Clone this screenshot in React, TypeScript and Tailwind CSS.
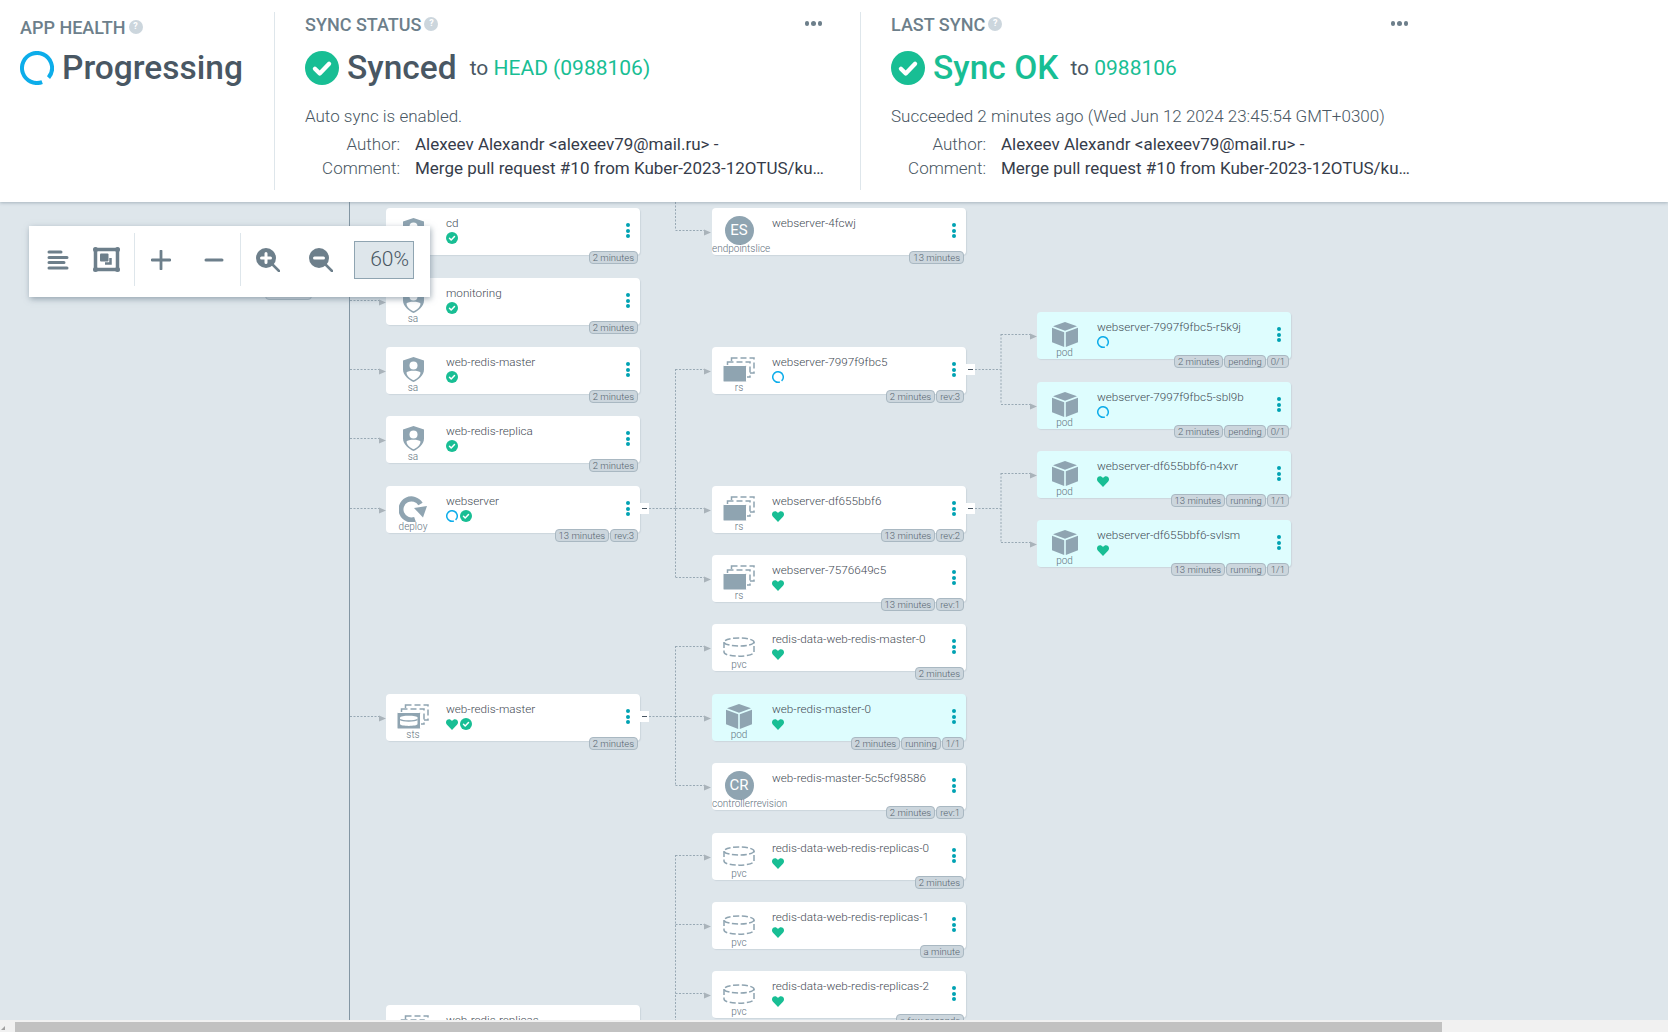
import React from 'react';

const G = '#8fa4b1';
const ROWS = [208, 278, 347, 416, 486, 555, 624, 694, 763, 833, 902, 971];
const CANVAS_TOP = 202;

function Help() {
  return (
    <span className="inline-flex w-[14px] h-[14px] rounded-full bg-[#ccd6dd] text-white text-[9px] font-bold items-center justify-center ml-[3px]">?</span>
  );
}

function CheckCircle({ size }: { size: number }) {
  return (
    <svg width={size} height={size} viewBox="0 0 24 24" className="shrink-0">
      <circle cx="12" cy="12" r="12" fill="#18be94" />
      <path d="M7 12.5l3.4 3.4L17 9" fill="none" stroke="#fff" strokeWidth="3" strokeLinecap="round" strokeLinejoin="round" />
    </svg>
  );
}

function Ring({ size, width }: { size: number; width: number }) {
  const r = 12 - width / 2;
  const c = 2 * Math.PI * r;
  return (
    <svg width={size} height={size} viewBox="0 0 24 24" className="shrink-0">
      <circle cx="12" cy="12" r={r} fill="none" stroke="#0dadea" strokeWidth={width} strokeDasharray={`${c * 0.91} ${c * 0.09}`} transform="rotate(70 12 12)" />
    </svg>
  );
}

function Heart() {
  return (
    <svg width="12" height="11" viewBox="0 0 24 22" className="shrink-0">
      <path d="M12 22L2 11.5C-1 8 -0.5 3.5 2.5 1.5 5.5-0.5 9.500.5 12 4c2.500-3.500 6.500-4.500 9.500-2.500 3 2 3.500 6.500.5 10z" fill="#18be94" />
    </svg>
  );
}

function Shield() {
  return (
    <svg width="21" height="25" viewBox="0 0 21 25">
      <path d="M10.500 0L21 3.500V12.500C21 18.500 15 23 10.500 25 6 23 0 18.500 0 12.500V3.500Z" fill={G} />
      <circle cx="10.500" cy="8.500" r="4" fill="#fff" />
      <path d="M3.500 15.500C5 13 16 13 17.500 15.500 17.500 19 13.500 22 10.500 23.300 7.500 22 3.500 19 3.500 15.500Z" fill="#fff" />
    </svg>
  );
}

function Deploy() {
  return (
    <svg width="28" height="26" viewBox="0 0 28 26">
      <path d="M16 23.300A10.500 10.500 0 1 1 21.500 8" fill="none" stroke={G} strokeWidth="5" />
      <polygon points="15,12 28,10 24,21.500" fill={G} />
    </svg>
  );
}

function Stack({ sts }: { sts?: boolean }) {
  return (
    <svg width="32" height="25" viewBox="0 0 32 25">
      <rect x="8.500" y="1" width="22.500" height="15" fill="none" stroke={G} strokeWidth="1.500" strokeDasharray="6 3" />
      <rect x="4.500" y="5" width="22.500" height="15" fill="#fff" stroke={G} strokeWidth="1.500" strokeDasharray="6 3" />
      <rect x="0" y="8.500" width="23.500" height="16.500" rx="1" fill={G} stroke="#fff" strokeWidth="1" />
      {sts && (
        <g>
          <path d="M3 13.500C3 11 20.500 11 20.500 13.500V20C20.500 22.500 3 22.500 3 20Z" fill="#fff" />
          <path d="M3 15.500C6 17.500 17.500 17.500 20.500 15.500" fill="none" stroke={G} strokeWidth="1.500" />
        </g>
      )}
    </svg>
  );
}

function Pvc() {
  return (
    <svg width="32" height="20" viewBox="0 0 32 20" fill="none" stroke={G} strokeWidth="1.500" strokeDasharray="6 2.500">
      <ellipse cx="16" cy="5" rx="15" ry="4" />
      <path d="M1 5V15C1 20.500 31 20.500 31 15V5" />
    </svg>
  );
}

function Pod() {
  return (
    <svg width="26" height="25" viewBox="0 0 26 25" fill={G}>
      <polygon points="13,0 25,4.300 13,8.800 1,4.300" />
      <polygon points="0,5.800 12.200,10.300 12.200,25 0,20.300" />
      <polygon points="26,5.800 13.800,10.300 13.800,25 26,20.300" />
    </svg>
  );
}

function Letters({ t }: { t: string }) {
  return (
    <span className="w-[29px] h-[29px] rounded-full bg-[#8fa4b1] text-white text-[15px] flex items-center justify-center shrink-0">{t}</span>
  );
}

function KindIcon({ kind }: { kind: string }) {
  if (kind === 'sa') return <Shield />;
  if (kind === 'deploy') return <Deploy />;
  if (kind === 'rs') return <Stack />;
  if (kind === 'sts') return <Stack sts />;
  if (kind === 'pvc') return <Pvc />;
  if (kind === 'pod') return <Pod />;
  if (kind === 'endpointslice') return <Letters t="ES" />;
  return <Letters t="CR" />;
}

type S = 'check' | 'ring' | 'heart';

type N = {
  x: number;
  y: number;
  kind: string;
  name: string;
  st: S[];
  badges: string[];
  toggle?: boolean;
};

const C1 = 386;
const C2 = 712;
const C3 = 1037;
const P = [312, 382, 451, 520];

const nodes: N[] = [
  { x: C1, y: ROWS[0], kind: 'sa', name: 'cd', st: ['check'], badges: ['2 minutes'] },
  { x: C1, y: ROWS[1], kind: 'sa', name: 'monitoring', st: ['check'], badges: ['2 minutes'] },
  { x: C1, y: ROWS[2], kind: 'sa', name: 'web-redis-master', st: ['check'], badges: ['2 minutes'] },
  { x: C1, y: ROWS[3], kind: 'sa', name: 'web-redis-replica', st: ['check'], badges: ['2 minutes'] },
  { x: C1, y: ROWS[4], kind: 'deploy', name: 'webserver', st: ['ring', 'check'], badges: ['13 minutes', 'rev:3'], toggle: true },
  { x: C1, y: ROWS[7], kind: 'sts', name: 'web-redis-master', st: ['heart', 'check'], badges: ['2 minutes'], toggle: true },
  { x: C1, y: 1005, kind: 'sts', name: 'web-redis-replicas', st: ['heart', 'check'], badges: ['2 minutes'], toggle: true },
  { x: C2, y: ROWS[0], kind: 'endpointslice', name: 'webserver-4fcwj', st: [], badges: ['13 minutes'] },
  { x: C2, y: ROWS[2], kind: 'rs', name: 'webserver-7997f9fbc5', st: ['ring'], badges: ['2 minutes', 'rev:3'], toggle: true },
  { x: C2, y: ROWS[4], kind: 'rs', name: 'webserver-df655bbf6', st: ['heart'], badges: ['13 minutes', 'rev:2'], toggle: true },
  { x: C2, y: ROWS[5], kind: 'rs', name: 'webserver-7576649c5', st: ['heart'], badges: ['13 minutes', 'rev:1'] },
  { x: C2, y: ROWS[6], kind: 'pvc', name: 'redis-data-web-redis-master-0', st: ['heart'], badges: ['2 minutes'] },
  { x: C2, y: ROWS[7], kind: 'pod', name: 'web-redis-master-0', st: ['heart'], badges: ['2 minutes', 'running', '1/1'] },
  { x: C2, y: ROWS[8], kind: 'controllerrevision', name: 'web-redis-master-5c5cf98586', st: [], badges: ['2 minutes', 'rev:1'] },
  { x: C2, y: ROWS[9], kind: 'pvc', name: 'redis-data-web-redis-replicas-0', st: ['heart'], badges: ['2 minutes'] },
  { x: C2, y: ROWS[10], kind: 'pvc', name: 'redis-data-web-redis-replicas-1', st: ['heart'], badges: ['a minute'] },
  { x: C2, y: ROWS[11], kind: 'pvc', name: 'redis-data-web-redis-replicas-2', st: ['heart'], badges: ['a few seconds'] },
  { x: C3, y: P[0], kind: 'pod', name: 'webserver-7997f9fbc5-r5k9j', st: ['ring'], badges: ['2 minutes', 'pending', '0/1'] },
  { x: C3, y: P[1], kind: 'pod', name: 'webserver-7997f9fbc5-sbl9b', st: ['ring'], badges: ['2 minutes', 'pending', '0/1'] },
  { x: C3, y: P[2], kind: 'pod', name: 'webserver-df655bbf6-n4xvr', st: ['heart'], badges: ['13 minutes', 'running', '1/1'] },
  { x: C3, y: P[3], kind: 'pod', name: 'webserver-df655bbf6-svlsm', st: ['heart'], badges: ['13 minutes', 'running', '1/1'] },
];

function Node({ n }: { n: N }) {
  const long = n.kind.length > 8;
  return (
    <div
      className={`absolute w-[254px] h-[47px] rounded-[4px] flex shadow-[1px_1px_1px_#ccd6dd] ${n.kind === 'pod' ? 'bg-[#defdfe]' : 'bg-white'}`}
      style={{ left: n.x, top: n.y - CANVAS_TOP }}
    >
      <div className={`w-[54px] shrink-0 flex flex-col items-center ${n.kind === 'pod' && n.x === C3 ? 'pl-[1px]' : ''}`}>
        <div className="h-[36px] pt-[9px] flex items-center justify-center">
          <KindIcon kind={n.kind} />
        </div>
        <div className={`h-[10px] leading-[10px] text-[10px] font-light whitespace-nowrap text-[#5f7380] ${long ? 'self-start' : ''}`}>{n.kind}</div>
      </div>
      <div className="ml-[6px] flex-1 min-w-0">
        <div className="mt-[8px] h-[14px] leading-[14px] text-[11.7px] font-light text-[#3f4a54] whitespace-nowrap">{n.name}</div>
        <div className="mt-[2px] h-[12px] flex items-center gap-[1.5px]">
          {n.st.map((s, i) =>
            s === 'check' ? <CheckCircle key={i} size={12} /> : s === 'ring' ? <Ring key={i} size={12} width={3} /> : <Heart key={i} />
          )}
        </div>
      </div>
      <div className="mr-[10px] mt-[15px] self-start flex flex-col gap-[1.7px]">
        <span className="w-[4px] h-[4px] rounded-full bg-[#00a2b3]" />
        <span className="w-[4px] h-[4px] rounded-full bg-[#00a2b3]" />
        <span className="w-[4px] h-[4px] rounded-full bg-[#00a2b3]" />
      </div>
      <div className="absolute right-[2px] top-[43px] flex gap-[1px]">
        {n.badges.map((b) => (
          <span key={b} className="h-[13px] leading-[11px] px-[3px] text-[9.5px] font-light whitespace-nowrap rounded-[4px] bg-[#ccd6dd] border border-[#a9b8c2] text-[#55646f]">{b}</span>
        ))}
      </div>
      {n.toggle && (
        <div className="absolute left-[253px] top-[17px] w-[10px] h-[11px] bg-white flex items-center justify-center">
          <span className="w-[5px] h-[1px] bg-[#495763]" />
        </div>
      )}
    </div>
  );
}

function Edges() {
  const y = (v: number) => v - CANVAS_TOP;
  const h: [number, number, number][] = [];
  const arrows: [number, number][] = [];
  const add = (x1: number, x2: number, row: number) => {
    h.push([x1, x2, y(row + 22)]);
    arrows.push([x2 + 6, y(row + 25)]);
  };
  [ROWS[1], ROWS[2], ROWS[3], ROWS[4], ROWS[7]].forEach((r) => add(350, 380, r));
  ROWS.forEach((r, i) => {
    if (i !== 1 && i !== 3) add(675.5, 705, r);
  });
  P.forEach((r) => add(1001, 1031, r));
  const v: [number, number, number][] = [
    [675.5, 202, ROWS[0] + 22],
    [675.5, ROWS[2] + 22, ROWS[5] + 22],
    [675.5, ROWS[6] + 22, ROWS[8] + 22],
    [675.5, ROWS[9] + 22, 1020],
    [1001, P[0] + 22, P[1] + 22],
    [1001, P[2] + 22, P[3] + 22],
  ];
  const out: [number, number, number][] = [
    [649, 675.5, y(ROWS[4] + 22)],
    [649, 675.5, y(ROWS[7] + 22)],
    [975, 1001, y(ROWS[2] + 22)],
    [975, 1001, y(ROWS[4] + 22)],
  ];
  return (
    <svg className="absolute left-0 top-0" width="1668" height="820">
      <line x1="349.500" x2="349.500" y1="0" y2="820" stroke="#8396a3" strokeWidth="1" />
      <g stroke="#98a9b4" strokeWidth="1" strokeDasharray="2 1.500">
        {[...h, ...out].map(([a, b, c], i) => (
          <line key={i} x1={a} x2={b} y1={c + 0.5} y2={c + 0.5} />
        ))}
        {v.map(([x, a, b], i) => (
          <line key={i} x1={x} x2={x} y1={y(a)} y2={y(b)} />
        ))}
      </g>
      {arrows.map(([x, c], i) => (
        <polygon key={i} points={`${x},${c - 0.5} ${x - 7},${c - 3.5} ${x - 7},${c + 2.5}`} fill="#a9b3ba" />
      ))}
    </svg>
  );
}

function ToolIcon({ name }: { name: string }) {
  const c = '#6d7f8b';
  if (name === 'align')
    return (
      <svg width="22" height="20" viewBox="0 0 22 20" stroke={c} strokeWidth="3" strokeLinecap="round">
        <path d="M2 2H14M2 7.500H20M2 12.500H17M2 18H20" />
      </svg>
    );
  if (name === 'fit')
    return (
      <svg width="27" height="25" viewBox="0 0 27 25">
        <rect x="2.500" y="2.500" width="22" height="20" fill="none" stroke={c} strokeWidth="3.500" />
        <circle cx="2.500" cy="2.500" r="2.500" fill={c} />
        <circle cx="24.500" cy="2.500" r="2.500" fill={c} />
        <circle cx="2.500" cy="22.500" r="2.500" fill={c} />
        <circle cx="24.500" cy="22.500" r="2.500" fill={c} />
        <rect x="7" y="6.500" width="8.500" height="8" fill={c} rx="1" />
        <path d="M17.500 11V16.500H12" fill="none" stroke={c} strokeWidth="2.500" />
      </svg>
    );
  if (name === 'plus')
    return (
      <svg width="20" height="20" viewBox="0 0 20 20" stroke={c} strokeWidth="2.800" strokeLinecap="round">
        <path d="M10 1V19M1 10H19" />
      </svg>
    );
  if (name === 'minus')
    return (
      <svg width="20" height="4" viewBox="0 0 20 4" stroke={c} strokeWidth="3" strokeLinecap="round">
        <path d="M2 2H18" />
      </svg>
    );
  return (
    <svg width="24" height="24" viewBox="0 0 24 24">
      <circle cx="10" cy="10" r="10" fill={c} />
      <path d="M16 16L23 23" stroke={c} strokeWidth="2.500" strokeLinecap="round" />
      <path d={name === 'zin' ? 'M5.500 10H14.500M10 5.500V14.500' : 'M5.500 10H14.500'} stroke="#fff" strokeWidth="3" strokeLinecap="round" />
    </svg>
  );
}

function Toolbar() {
  return (
    <div className="absolute left-[29px] top-[24px] w-[401px] h-[71px] bg-white flex items-center pl-[4px] pb-[4px] shadow-[1px_2px_6px_rgba(90,110,125,0.55)]">
      <div className="w-[49px] flex justify-center"><ToolIcon name="align" /></div>
      <div className="w-[49px] mr-[3px] flex justify-center"><ToolIcon name="fit" /></div>
      <div className="w-[1px] h-[53px] bg-[#dee6eb]" />
      <div className="w-[52px] flex justify-center"><ToolIcon name="plus" /></div>
      <div className="w-[53px] flex justify-center"><ToolIcon name="minus" /></div>
      <div className="w-[1px] h-[53px] bg-[#dee6eb]" />
      <div className="w-[53px] flex justify-center"><ToolIcon name="zin" /></div>
      <div className="w-[53px] flex justify-center"><ToolIcon name="zout" /></div>
      <div className="ml-[7px] w-[60px] h-[38px] bg-[#dee6eb] border border-[#8fa4b1] flex items-center justify-end pr-[4px] text-[21px] font-light text-[#495763]">60%</div>
    </div>
  );
}

function More() {
  return (
    <div className="flex gap-[2px] -mt-[1px] shrink-0">
      <span className="w-[4.500px] h-[4.500px] rounded-full bg-[#6d7f8b]" />
      <span className="w-[4.500px] h-[4.500px] rounded-full bg-[#6d7f8b]" />
      <span className="w-[4.500px] h-[4.500px] rounded-full bg-[#6d7f8b]" />
    </div>
  );
}

function Meta({ label, value }: { label: string; value: string }) {
  return (
    <div className="flex h-[24px] items-center text-[17px]">
      <div className="w-[95px] text-right font-light text-[#495763] shrink-0">{label}</div>
      <div className="ml-[15px] w-[411px] shrink-0 truncate text-[#363c4a]">{value}</div>
    </div>
  );
}

const COMMENT = 'Merge pull request #10 from Kuber-2023-12OTUS/kuber-homeworks';
const AUTHOR = 'Alexeev Alexandr <alexeev79@mail.ru> -';

export default function App() {
  return (
    <div className="w-[1668px] h-[1032px] overflow-hidden flex flex-col bg-[#f1f1f1] text-[#495763] [font-family:Roboto,sans-serif]">
      <header className="h-[202px] shrink-0 bg-white flex relative z-10 shadow-[0_1px_3px_rgba(100,120,135,0.45)]">
        <div className="w-[275px] mt-[12px] h-[178px] border-r border-[#dee6eb] pl-[20px]">
          <div className="mt-[6px] h-[18px] flex items-center text-[18px] font-medium text-[#6d7f8b]">APP HEALTH<Help /></div>
          <div className="mt-[14px] flex items-center">
            <Ring size={34} width={2.800} />
            <span className="ml-[8px] text-[33.5px] font-medium leading-[36px]">Progressing</span>
          </div>
        </div>
        <div className="w-[586px] mt-[12px] h-[178px] border-r border-[#dee6eb] pl-[30px] pr-[38px]">
          <div className="mt-[3px] h-[18px] flex items-center justify-between">
            <div className="flex items-center text-[18px] font-medium text-[#6d7f8b]">SYNC STATUS<Help /></div>
            <More />
          </div>
          <div className="mt-[17px] flex items-center">
            <CheckCircle size={34} />
            <span className="ml-[8px] text-[33.5px] font-medium leading-[36px]">Synced</span>
            <span className="ml-[13px] text-[21px] mt-[1px]">to <span className="text-[#18be94]">HEAD (0988106)</span></span>
          </div>
          <div className="mt-[18px] h-[24px] leading-[24px] text-[17px] font-light">Auto sync is enabled.</div>
          <div className="mt-[5px]">
            <Meta label="Author:" value={AUTHOR} />
            <Meta label="Comment:" value={COMMENT} />
          </div>
        </div>
        <div className="w-[547px] mt-[12px] h-[178px] pl-[30px]">
          <div className="mt-[3px] h-[18px] flex items-center justify-between">
            <div className="flex items-center text-[18px] font-medium text-[#6d7f8b]">LAST SYNC<Help /></div>
            <More />
          </div>
          <div className="mt-[17px] flex items-center">
            <CheckCircle size={34} />
            <span className="ml-[8px] text-[33.5px] font-medium leading-[36px] text-[#18be94]">Sync OK</span>
            <span className="ml-[12px] text-[21px] mt-[1px]">to <span className="text-[#18be94]">0988106</span></span>
          </div>
          <div className="mt-[18px] h-[24px] leading-[24px] text-[17px] font-light whitespace-nowrap">Succeeded 2 minutes ago (Wed Jun 12 2024 23:45:54 GMT+0300)</div>
          <div className="mt-[5px]">
            <Meta label="Author:" value={AUTHOR} />
            <Meta label="Comment:" value={COMMENT} />
          </div>
        </div>
      </header>
      <main className="relative h-[818px] shrink-0 bg-[#dee6eb] overflow-hidden">
        <Edges />
        {nodes.map((n) => (
          <Node key={`${n.x}-${n.y}`} n={n} />
        ))}
        <div className="absolute left-[265px] top-[83px] w-[47px] h-[15px] rounded-[4px] bg-[#ccd6dd] border border-[#a9b8c2]" />
        <Toolbar />
      </main>
      <div className="h-[12px] shrink-0 pt-[2px] flex bg-[#f1f1f1]">
        <div className="w-[15px] relative">
          <div className="absolute left-[1px] bottom-[2px] w-0 h-0 border-l-[4px] border-l-transparent border-b-[4px] border-b-[#a0a0a0]" />
        </div>
        <div className="w-[1427px] bg-[#c1c1c1]" />
      </div>
    </div>
  );
}
